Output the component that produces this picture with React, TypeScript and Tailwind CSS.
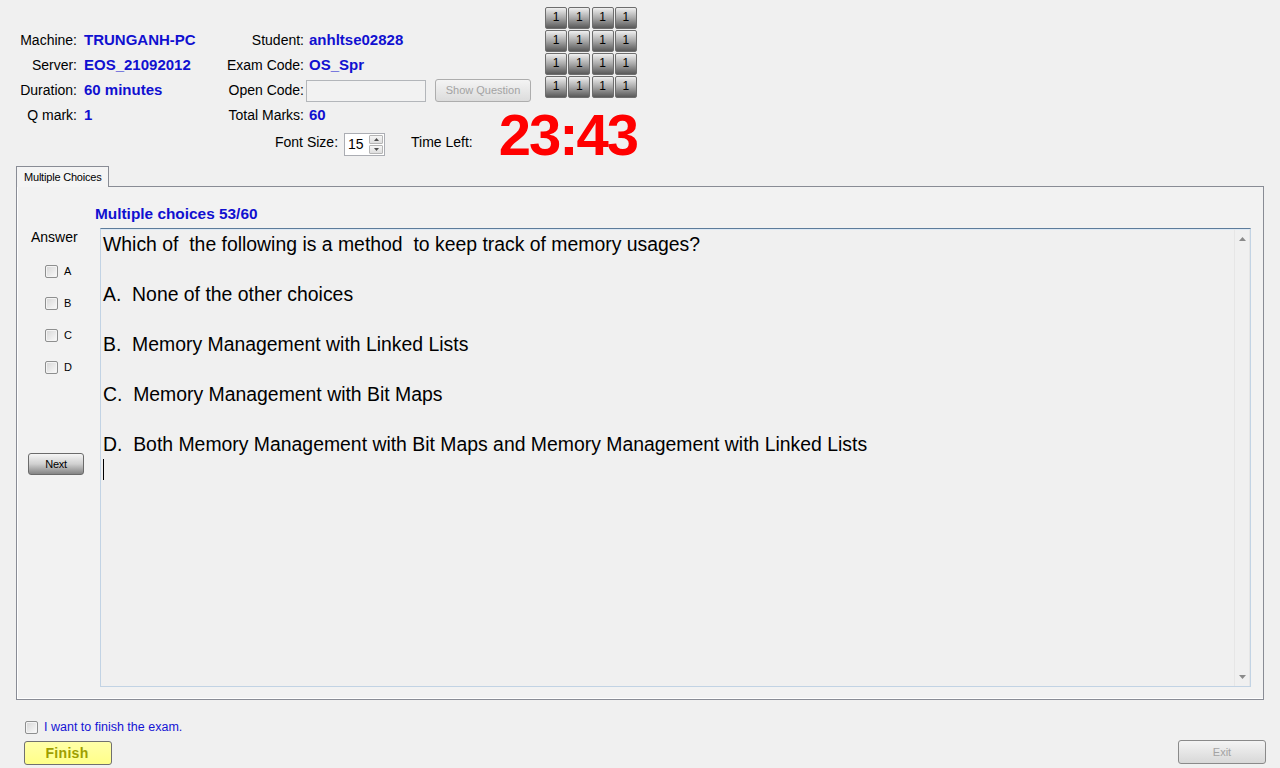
import React from "react";

const FONT = { fontFamily: '"Liberation Sans", Arial, sans-serif' };

const LABEL = "text-[14px] text-black";
const VALUE = "text-[15px] font-bold text-[#1010d0]";

const QUESTION_LINES = [
  "Which of  the following is a method  to keep track of memory usages?",
  "",
  "A.  None of the other choices",
  "",
  "B.  Memory Management with Linked Lists",
  "",
  "C.  Memory Management with Bit Maps",
  "",
  "D.  Both Memory Management with Bit Maps and Memory Management with Linked Lists",
];

function CheckBox() {
  return (
    <span className="inline-block h-[13px] w-[13px] shrink-0 rounded-[2px] border border-[#8e8f8f] bg-linear-to-br from-[#d6d6d6] to-[#fbfbfb] shadow-[inset_0_0_0_1px_#f4f4f4]" />
  );
}

function InfoRow({
  label,
  value,
  label2,
  children,
}: {
  label: string;
  value: string;
  label2: string;
  children: React.ReactNode;
}) {
  return (
    <div className="flex h-[25px] items-center">
      <div className={`w-[77px] text-right ${LABEL}`}>{label}</div>
      <div className={`w-[147px] pl-[7px] ${VALUE}`}>{value}</div>
      <div className={`w-[80px] text-right ${LABEL}`}>{label2}</div>
      {children}
    </div>
  );
}

function NumberGrid() {
  return (
    <div className="grid grid-cols-4 gap-px">
      {Array.from({ length: 16 }).map((_, i) => (
        <div
          key={i}
          className="flex h-[22px] w-[22px] items-center justify-center rounded-[2px] border border-[#6e6e6e] bg-linear-to-b from-[#f0f0f0] via-[#a9a9a9] to-[#5a5a5a] pb-[2px] text-[12px] text-black"
        >
          1
        </div>
      ))}
    </div>
  );
}

function Spinner() {
  return (
    <div className="flex h-[23px] w-[41px] border border-[#abadb3] bg-white">
      <div className="flex flex-1 items-center pl-[3px] text-[14px] text-black">15</div>
      <div className="flex w-[16px] flex-col gap-px p-px">
        <div className="flex flex-1 items-center justify-center rounded-[1px] border border-[#b5b5b5] bg-linear-to-b from-[#f6f6f6] to-[#dedede]">
          <svg width="5" height="3" viewBox="0 0 5 3">
            <path d="M0 3 L2.5 0 L5 3 Z" fill="#4d4d4d" />
          </svg>
        </div>
        <div className="flex flex-1 items-center justify-center rounded-[1px] border border-[#b5b5b5] bg-linear-to-b from-[#f6f6f6] to-[#dedede]">
          <svg width="5" height="3" viewBox="0 0 5 3">
            <path d="M0 0 L5 0 L2.5 3 Z" fill="#4d4d4d" />
          </svg>
        </div>
      </div>
    </div>
  );
}

function Header() {
  return (
    <div className="flex h-[166px]">
      <div className="flex w-[545px] flex-col pt-[28px]">
        <InfoRow label="Machine:" value="TRUNGANH-PC" label2="Student:">
          <span className={`pl-[5px] ${VALUE}`}>anhltse02828</span>
        </InfoRow>
        <InfoRow label="Server:" value="EOS_21092012" label2="Exam Code:">
          <span className={`pl-[5px] ${VALUE}`}>OS_Spr</span>
        </InfoRow>
        <InfoRow label="Duration:" value="60 minutes" label2="Open Code:">
          <div className="ml-[2px] h-[22px] w-[120px] border border-[#b3b6ba] bg-[#f2f2f2]" />
          <div className="ml-[9px] flex h-[23px] w-[96px] items-center justify-center rounded-[3px] border border-[#adadad] bg-linear-to-b from-[#f4f4f4] to-[#dcdcdc] text-[11px] text-[#a3a3a3]">
            Show Question
          </div>
        </InfoRow>
        <InfoRow label="Q mark:" value="1" label2="Total Marks:">
          <span className={`pl-[5px] ${VALUE}`}>60</span>
        </InfoRow>
        <div className="mt-[3px] flex h-[23px] items-center pl-[275px]">
          <span className={LABEL}>Font Size:</span>
          <div className="ml-[6px] mt-[3px]">
            <Spinner />
          </div>
          <span className={`ml-[26px] ${LABEL}`}>Time Left:</span>
        </div>
      </div>
      <div className="flex w-[92px] flex-col pt-[7px]">
        <NumberGrid />
        <div className="mt-[8px] self-end whitespace-nowrap text-[58px] font-bold leading-none tracking-[-2px] text-[#ff0000]">
          23:43
        </div>
      </div>
    </div>
  );
}

function AnswerColumn() {
  return (
    <div className="flex w-[83px] shrink-0 flex-col">
      <div className={`pl-[14px] pt-px leading-[16px] ${LABEL}`}>Answer</div>
      <div className="mt-[10px] flex flex-col">
        {["A", "B", "C", "D"].map((l) => (
          <div key={l} className="flex h-[32px] items-center pl-[28px]">
            <CheckBox />
            <span className="ml-[6px] text-[11px] text-black">{l}</span>
          </div>
        ))}
      </div>
      <div className="ml-[11px] mt-[70px] flex h-[22px] w-[56px] items-center justify-center rounded-[3px] border border-[#6b6b6b] bg-linear-to-b from-[#f6f6f6] via-[#d0d0d0] to-[#858585] text-[11px] tracking-[-0.3px] text-black">
        Next
      </div>
    </div>
  );
}

function QuestionBox() {
  return (
    <div className="flex flex-1 border border-[#c2d3e4] border-t-[#5d7c9b] bg-[#f0f0f0] shadow-[inset_0_1px_0_#dde9f5]">
      <div className="flex-1 pl-[2px] pt-[3px] text-[19.4px] leading-[25px] text-black">
        {QUESTION_LINES.map((line, i) => (
          <div key={i} className="h-[25px] whitespace-pre">
            {line}
          </div>
        ))}
        <div className="flex h-[25px] items-center">
          <span className="inline-block h-[21px] w-px bg-black" />
        </div>
      </div>
      <div className="flex w-[16px] flex-col items-center justify-between border-x border-[#e6e6e6] py-[8px] pb-[7px]">
        <svg width="7" height="4" viewBox="0 0 7 4">
          <path d="M0 4 L3.5 0 L7 4 Z" fill="#8a8a8a" />
        </svg>
        <svg width="7" height="4" viewBox="0 0 7 4">
          <path d="M0 0 L7 0 L3.5 4 Z" fill="#8a8a8a" />
        </svg>
      </div>
    </div>
  );
}

function ExamPanel() {
  return (
    <div className="ml-[16px] w-[1248px]">
      <div className="relative z-10 -mb-px flex h-[21px] w-[93px] items-center border border-b-0 border-[#898c95] bg-[#f4f4f4] pl-[7px] text-[11px] tracking-[-0.2px] text-black">
        Multiple Choices
      </div>
      <div className="flex h-[514px] flex-col border border-[#898c95] bg-[#f2f2f2] shadow-[inset_1px_0_0_#ffffff,inset_0_-1px_0_#ffffff]">
        <div className="pl-[78px] pt-[18px] text-[15.4px] font-bold leading-[17px] text-[#1010d0]">
          Multiple choices 53/60
        </div>
        <div className="mt-[6px] flex flex-1 pb-[12px] pr-[12px]">
          <AnswerColumn />
          <QuestionBox />
        </div>
      </div>
    </div>
  );
}

function Footer() {
  return (
    <div className="flex flex-col">
      <div className="mt-[19px] flex h-[16px] items-center pl-[25px]">
        <CheckBox />
        <span className="ml-[6px] text-[12.5px] text-[#1414d4]">I want to finish the exam.</span>
      </div>
      <div className="mt-[5px] flex items-start justify-between pl-[24px] pr-[14px]">
        <div className="mt-px flex h-[24px] w-[88px] items-center justify-center rounded-[3px] border border-[#707070] bg-linear-to-b from-[#ffffa8] to-[#ffff88] pr-[2px] text-[14px] font-bold tracking-[0.3px] text-[#9e9e00]">
          Finish
        </div>
        <div className="flex h-[24px] w-[88px] items-center justify-center rounded-[3px] border border-[#8a8a8a] bg-linear-to-b from-[#f4f4f4] to-[#d8d8d8] text-[11px] text-[#a3a3a3]">
          Exit
        </div>
      </div>
    </div>
  );
}

export default function App() {
  return (
    <div style={FONT} className="h-[768px] w-[1280px] overflow-hidden bg-[#f0f0f0]">
      <Header />
      <ExamPanel />
      <Footer />
    </div>
  );
}
